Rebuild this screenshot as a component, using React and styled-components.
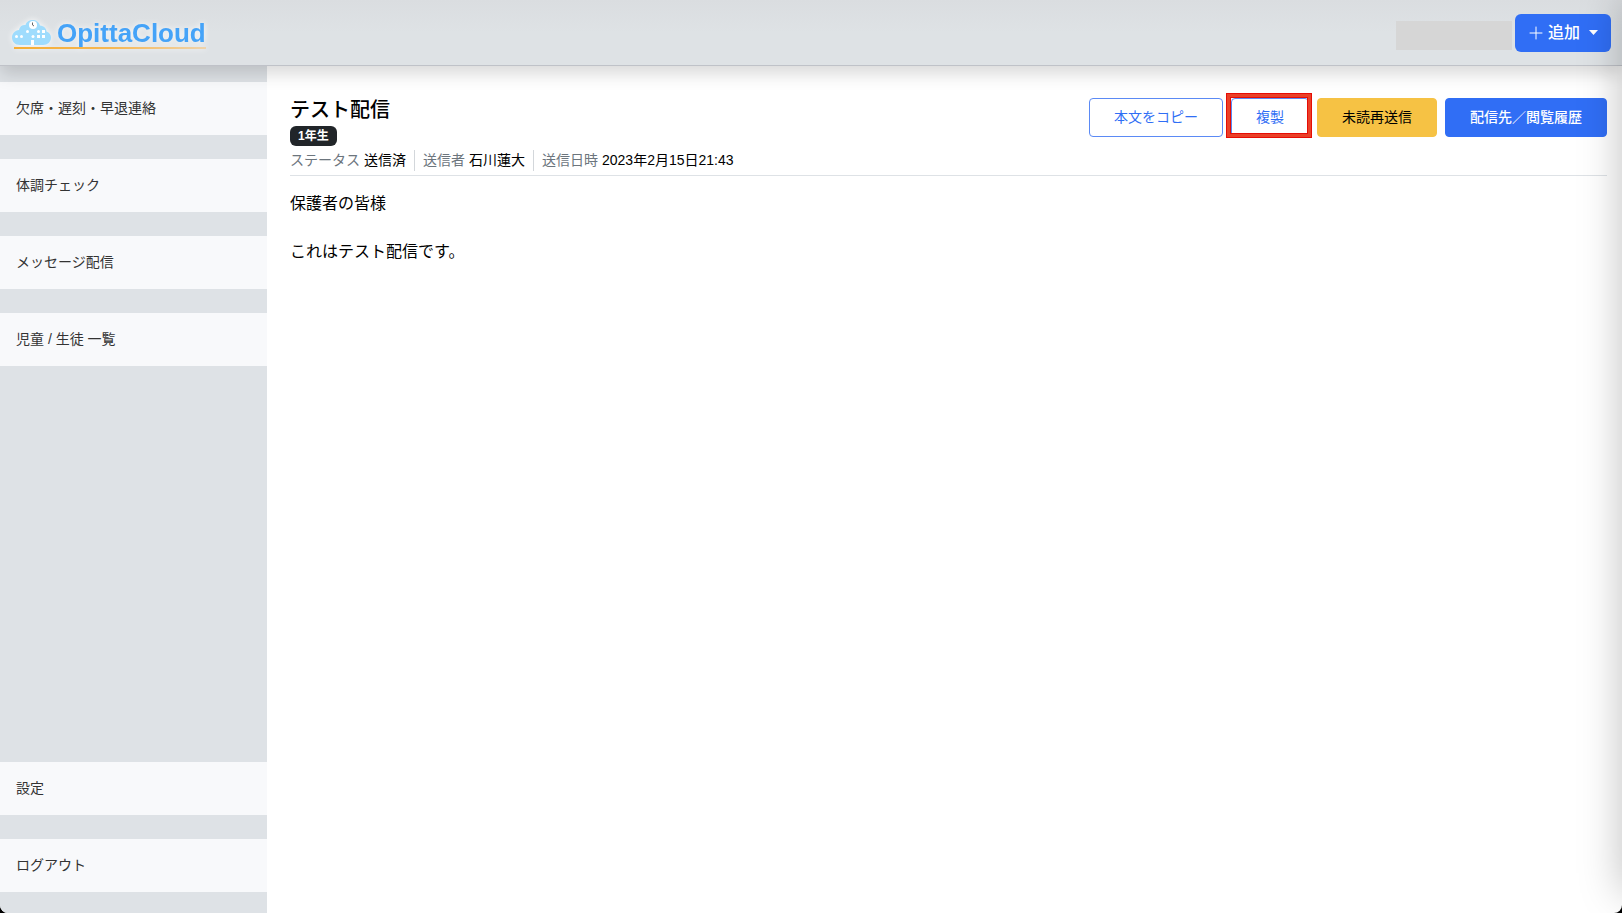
import React from "react";
import styled, { createGlobalStyle, css } from "styled-components";

const GlobalStyle = createGlobalStyle`
  *, *::before, *::after { box-sizing: border-box; }
  html, body, #root { height: 100%; }
  body {
    margin: 0;
    overflow: hidden;
    background: #000;
    color: #000;
    font-family: "Liberation Sans", "Noto Sans CJK JP", sans-serif;
    font-size: 16px;
    line-height: 24px;
  }
`;

const Window = styled.div`
  position: relative;
  display: flex;
  flex-direction: column;
  min-height: 100%;
  overflow: hidden;
  border-radius: 0 0 8px 8px;
  background: #fff;
`;

const Header = styled.header`
  z-index: 1;
  display: flex;
  align-items: center;
  justify-content: space-between;
  height: 66px;
  padding: 0 11px;
  border-bottom: 1px solid #bfc2c8;
  background: linear-gradient(#dadde0, #dee2e5 50%);
  box-shadow: 0 8px 16px rgba(0, 0, 0, 0.15);
`;

const Brand = styled.a`
  display: grid;
  width: 195px;
  padding-top: 2px;
  color: #45a3f8;
  font-size: 26px;
  font-weight: 700;
  line-height: 28px;
  text-decoration: none;
  filter: drop-shadow(0 0 3px rgba(255, 255, 255, 0.9));
`;

const BrandRow = styled.span`
  display: flex;
  align-items: center;
  gap: 6px;
`;

const BrandLine = styled.span`
  height: 2px;
  margin-left: 3px;
  background: linear-gradient(90deg, #f5ae36, #f7b752 50%, #efd3ab);
`;

const HeaderActions = styled.div`
  display: flex;
  align-items: center;
  gap: 3px;
`;

const UserName = styled.div`
  width: 116px;
  height: 29px;
  margin-top: 5px;
  background: #d6d6d6;
`;

const AddButton = styled.button`
  display: flex;
  align-items: center;
  height: 38px;
  padding: 0 13px;
  border: 0;
  border-radius: 6px;
  background: #306ef5;
  color: #fff;
  font: inherit;
  font-weight: 500;

  svg:first-child { margin-right: 4px; }
  svg:last-child { margin-left: 9px; }
`;

const Body = styled.div`
  display: flex;
  flex: 1;
`;

const Sidebar = styled.nav`
  display: flex;
  flex: 0 0 267px;
  flex-direction: column;
  justify-content: space-between;
  padding: 16px 0 21px;
  background: #dee2e6;
`;

const NavGroup = styled.div`
  display: grid;
  gap: 24px;
`;

const NavItem = styled.a`
  padding: 16px;
  background: #f8f9fb;
  color: #333;
  font-size: 14px;
  line-height: 21px;
  text-decoration: none;
`;

const Main = styled.main`
  flex: 1;
  min-width: 0;
  padding: 32px 15px 24px 23px;
`;

const Article = styled.div`
  display: flex;
  align-items: flex-start;
  justify-content: space-between;
  padding-bottom: 4px;
  border-bottom: 1px solid #dee2e6;
`;

const Title = styled.h1`
  margin: 0;
  font-size: 20px;
  font-weight: 500;
  line-height: 24px;
`;

const BadgeRow = styled.div`
  display: flex;
  padding: 4px 0;
`;

const Badge = styled.span`
  padding: 0 8px;
  border-radius: 6px;
  background: #212529;
  color: #fff;
  font-size: 12px;
  font-weight: 700;
  line-height: 20px;
`;

const Meta = styled.dl`
  display: flex;
  margin: 0;
  font-size: 14px;
  line-height: 21px;
`;

const MetaItem = styled.div`
  display: flex;
  gap: 4px;

  & + & {
    margin-left: 8px;
    padding-left: 8px;
    border-left: 1px solid #d3d7db;
  }

  dt { color: #6c757d; }
  dd { margin: 0; }
`;

const Actions = styled.div`
  display: flex;
  gap: 8px;
`;

const tones = {
  outline: css`border-color: #5b8af5; background: #fff; color: #306ef5;`,
  warning: css`border-color: #f6c244; background: #f6c244; color: #000;`,
  primary: css`border-color: #306ef5; background: #306ef5; color: #fff; font-weight: 500;`,
};

const ActionButton = styled.button`
  height: 39px;
  padding: 0 24px 2px;
  border: 1px solid;
  border-radius: 4px;
  font: inherit;
  font-size: 14px;
  ${({ $tone }) => tones[$tone]}
`;

const Highlight = styled.span`
  position: relative;
  display: flex;

  &::after {
    content: "";
    position: absolute;
    inset: -5px -3px -1px -5px;
    border: 1px solid #e60d05;
    box-shadow: inset 0 0 0 3px #ea4028, inset 0 0 0 4px #e60d05;
    pointer-events: none;
  }
`;

const Message = styled.p`
  margin: 16px 0 0;
  white-space: pre-line;
`;

const DrawerShadow = styled.div`
  position: absolute;
  z-index: 2;
  top: 0;
  bottom: 20px;
  left: 100%;
  width: 400px;
  box-shadow: 0 0 40px rgba(0, 0, 0, 0.25);
`;

const CloudIcon = () => (
  <svg width="40" height="27" viewBox="0 0 40 27" aria-hidden="true">
    <path fill="#9fdcfd" d="M9 26C4 26 1 22.500 1 18.500C1 14.500 4 11.500 8 11C8.500 7.500 11.500 5.500 14.500 6C15.500 2.500 18.500 1 21.500 1C25 1 28 3 29 6.500C33 7 35.500 9.500 35.500 12.500C38.500 13.500 40 16 40 18.500C40 23 36.500 26 32 26Z" />
    <circle cx="22" cy="6" r="4" fill="#fff" />
    <path d="M21.500 3.500v2.500l1.500 1" fill="none" stroke="#666" />
    <g fill="#fff">
      <circle cx="5.500" cy="17.500" r="1.500" />
      <circle cx="10.500" cy="17.500" r="1.500" />
      <circle cx="16.500" cy="12.500" r="1.500" />
      <circle cx="22" cy="17.500" r="1.500" />
      <circle cx="27.500" cy="12.500" r="1.500" />
      <rect x="31" y="11" width="3" height="3" />
      <rect x="26" y="16" width="3" height="3" />
      <rect x="31" y="16" width="3" height="3" />
      <rect x="20" y="21" width="3" height="5" />
    </g>
  </svg>
);

const PlusIcon = () => (
  <svg width="16" height="16" viewBox="0 0 16 16" aria-hidden="true">
    <path d="M8 2v12M2 8h12" stroke="#fff" strokeLinecap="round" />
  </svg>
);

const CaretIcon = () => (
  <svg width="9" height="5" viewBox="0 0 9 5" aria-hidden="true">
    <path d="M0 0h9L4.500 5z" fill="#fff" />
  </svg>
);

const mainLinks = ["欠席・遅刻・早退連絡", "体調チェック", "メッセージ配信", "児童 / 生徒 一覧"];
const accountLinks = ["設定", "ログアウト"];
const meta = [
  ["ステータス", "送信済"],
  ["送信者", "石川蓮大"],
  ["送信日時", "2023年2月15日21:43"],
];

const Links = ({ items }) => (
  <NavGroup>
    {items.map((label) => (
      <NavItem key={label} href="#">{label}</NavItem>
    ))}
  </NavGroup>
);

export default function App() {
  return (
    <>
      <GlobalStyle />
      <Window>
        <Header>
          <Brand href="#">
            <BrandRow><CloudIcon />OpittaCloud</BrandRow>
            <BrandLine />
          </Brand>
          <HeaderActions>
            <UserName />
            <AddButton type="button"><PlusIcon />追加<CaretIcon /></AddButton>
          </HeaderActions>
        </Header>
        <Body>
          <Sidebar>
            <Links items={mainLinks} />
            <Links items={accountLinks} />
          </Sidebar>
          <Main>
            <Article>
              <div>
                <Title>テスト配信</Title>
                <BadgeRow><Badge>1年生</Badge></BadgeRow>
                <Meta>
                  {meta.map(([term, value]) => (
                    <MetaItem key={term}><dt>{term}</dt><dd>{value}</dd></MetaItem>
                  ))}
                </Meta>
              </div>
              <Actions>
                <ActionButton type="button" $tone="outline">本文をコピー</ActionButton>
                <Highlight>
                  <ActionButton type="button" $tone="outline">複製</ActionButton>
                </Highlight>
                <ActionButton type="button" $tone="warning">未読再送信</ActionButton>
                <ActionButton type="button" $tone="primary">配信先／閲覧履歴</ActionButton>
              </Actions>
            </Article>
            <Message>{"保護者の皆様\n\nこれはテスト配信です。"}</Message>
          </Main>
        </Body>
        <DrawerShadow />
      </Window>
    </>
  );
}
